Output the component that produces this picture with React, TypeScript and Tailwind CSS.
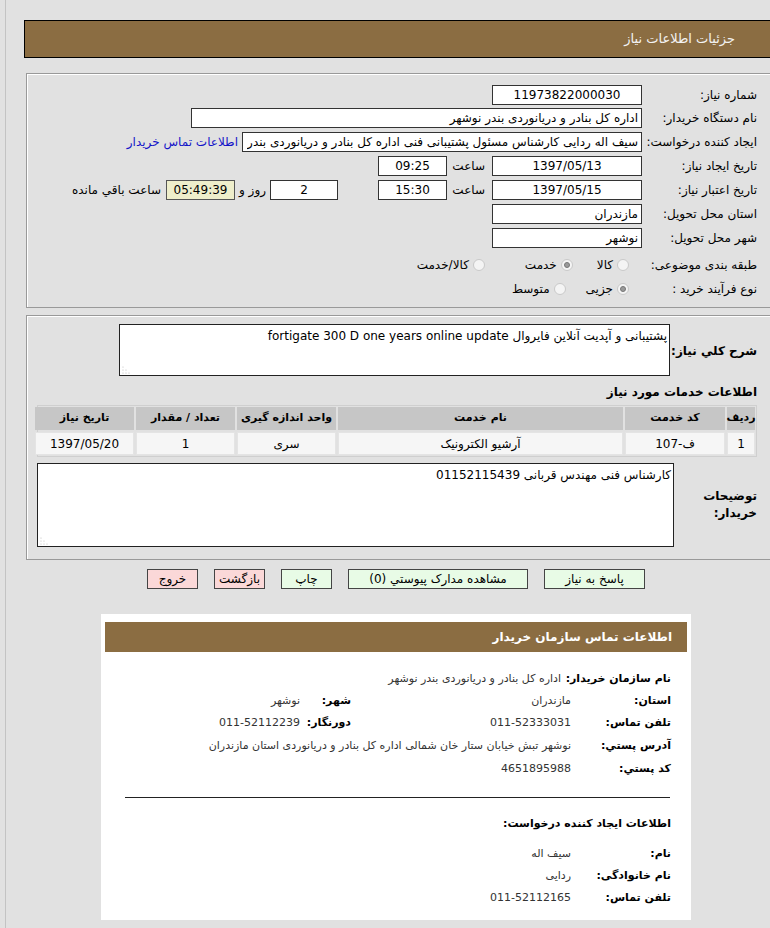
import React from "react";

const box = "h-[20px] border border-[#333] bg-white flex items-center overflow-hidden whitespace-nowrap";

function Field({ w, children, center = false }: { w: string; children: React.ReactNode; center?: boolean }) {
  return (
    <div className={`${box} ${w} shrink-0 px-[3px] ${center ? "justify-center" : "justify-start"}`}>
      {children}
    </div>
  );
}

function Radio({ checked = false }: { checked?: boolean }) {
  return (
    <span className="w-[12px] h-[12px] shrink-0 rounded-full border border-[#c9c9c9] bg-[#f4f4f4] flex items-center justify-center">
      {checked && <span className="w-[6px] h-[6px] rounded-full bg-[#9a9a9a] border border-[#777]" />}
    </span>
  );
}

function Grip() {
  return (
    <svg width="8" height="8" viewBox="0 0 8 8" className="shrink-0">
      <circle cx="1" cy="7" r="0.6" fill="#bbb" />
      <circle cx="4" cy="7" r="0.6" fill="#bbb" />
      <circle cx="1" cy="4" r="0.6" fill="#bbb" />
      <circle cx="7" cy="7" r="0.6" fill="#bbb" />
      <circle cx="4" cy="4" r="0.6" fill="#bbb" />
      <circle cx="1" cy="1" r="0.6" fill="#bbb" />
    </svg>
  );
}

const cols = [
  { title: "ردیف", w: "w-[28px]", value: "1" },
  { title: "کد خدمت", w: "w-[100px]", value: "ف-107" },
  { title: "نام خدمت", w: "w-[285px]", value: "آرشیو الکترونیک" },
  { title: "واحد اندازه گیری", w: "w-[99px]", value: "سری" },
  { title: "تعداد / مقدار", w: "w-[99px]", value: "1" },
  { title: "تاریخ نیاز", w: "w-[99px]", value: "1397/05/20" },
];

function InfoRow({ label, value, label2, value2, h = "h-[22px]", lw = "w-[100px]" }: {
  label: string; value: string; label2?: string; value2?: string; h?: string; lw?: string;
}) {
  return (
    <div className={`flex items-center ${h}`}>
      <div className={`${lw} shrink-0 font-bold text-[11px] whitespace-nowrap`}>{label}</div>
      <div className="w-[220px] shrink-0 text-[11px] text-[#333] whitespace-nowrap">{value}</div>
      {label2 && <div className="w-[51px] shrink-0 font-bold text-[11px] whitespace-nowrap">{label2}</div>}
      {value2 && <div className="text-[11px] text-[#333] whitespace-nowrap">{value2}</div>}
    </div>
  );
}

export default function App() {
  return (
    <div className="w-[770px] h-[928px] overflow-hidden bg-[#e1e1e1] text-[12px] text-black font-['DejaVu_Sans',sans-serif] flex">
      <div className="w-[5px] shrink-0" />
      <div className="w-[765px] shrink-0 border-l border-[#c3c3c3] pl-[18px]">
        <div dir="rtl" className="w-[751px]">
          {/* Header */}
          <div className="mt-[20px] h-[38px] border border-black bg-[#8b6d42] flex items-center pr-[39px] text-[13px] text-[#f3f3f3]">
            جزئیات اطلاعات نیاز
          </div>

          {/* Panel 1 */}
          <div className="mt-[15px] w-[749px] border border-[#999] shadow-[inset_1px_1px_0_#fff] pt-[9px] pb-[7px] pr-[17px]">
            <div className="flex items-center h-[23px]">
              <div className="w-[115px] shrink-0">شماره نیاز:</div>
              <Field w="w-[150px]" center>11973822000030</Field>
            </div>
            <div className="flex items-center h-[24px]">
              <div className="w-[115px] shrink-0">نام دستگاه خریدار:</div>
              <Field w="w-[451px]">اداره کل بنادر و دریانوردی بندر نوشهر</Field>
            </div>
            <div className="flex items-center h-[24px]">
              <div className="w-[115px] shrink-0 whitespace-nowrap">ایجاد کننده درخواست:</div>
              <Field w="w-[400px]">
                <span className="overflow-hidden">سیف اله ردایی کارشناس مسئول پشتیبانی فنی اداره کل بنادر و دریانوردی بندر</span>
              </Field>
              <span className="mr-[4px] text-[#1414c8] whitespace-nowrap">اطلاعات تماس خریدار</span>
            </div>
            <div className="flex items-center h-[24px]">
              <div className="w-[115px] shrink-0">تاریخ ایجاد نیاز:</div>
              <Field w="w-[150px]" center>1397/05/13</Field>
              <div className="w-[45px] shrink-0 pr-[7px]">ساعت</div>
              <Field w="w-[69px]" center>09:25</Field>
            </div>
            <div className="flex items-center h-[24px]">
              <div className="w-[115px] shrink-0">تاریخ اعتبار نیاز:</div>
              <Field w="w-[150px]" center>1397/05/15</Field>
              <div className="w-[45px] shrink-0 pr-[7px]">ساعت</div>
              <Field w="w-[69px]" center>15:30</Field>
              <div className="w-[40px] shrink-0" />
              <Field w="w-[68px]" center>2</Field>
              <span className="mr-[4px] ml-[4px] whitespace-nowrap">روز و</span>
              <div className="h-[20px] w-[69px] shrink-0 border border-[#555] bg-[#eeeecb] flex items-center justify-center">05:49:39</div>
              <span className="mr-[5px] whitespace-nowrap">ساعت باقي مانده</span>
            </div>
            <div className="flex items-center h-[24px]">
              <div className="w-[115px] shrink-0">استان محل تحویل:</div>
              <Field w="w-[150px]">مازندران</Field>
            </div>
            <div className="flex items-center h-[24px]">
              <div className="w-[115px] shrink-0">شهر محل تحویل:</div>
              <Field w="w-[150px]">نوشهر</Field>
            </div>
            <div className="flex items-center h-[24px] mt-[3px]">
              <div className="w-[115px] shrink-0">طبقه بندی موضوعی:</div>
              <span className="mr-[13px]"><Radio /></span>
              <span className="mr-[4px]">کالا</span>
              <span className="mr-[24px]"><Radio checked /></span>
              <span className="mr-[4px]">خدمت</span>
              <span className="mr-[40px]"><Radio /></span>
              <span className="mr-[4px]">کالا/خدمت</span>
            </div>
            <div className="flex items-center h-[23px]">
              <div className="w-[115px] shrink-0">نوع فرآیند خرید :</div>
              <span className="mr-[13px]"><Radio checked /></span>
              <span className="mr-[4px]">جزیی</span>
              <span className="mr-[20px]"><Radio /></span>
              <span className="mr-[4px]">متوسط</span>
            </div>
          </div>

          {/* Panel 2 */}
          <div className="mt-[7px] w-[749px] border border-[#999] shadow-[inset_1px_1px_0_#fff] pt-[8px] pb-[12px] pr-[17px]">
            <div className="flex items-center">
              <div className="w-[87px] shrink-0 font-bold text-[12px] whitespace-nowrap pt-[2px]">شرح کلي نیاز:</div>
              <div className="w-[551px] h-[52px] border border-[#222] bg-white flex flex-col justify-between px-[2px] pt-[2px] pb-[1px]">
                <div className="whitespace-nowrap">پشتیبانی و آپدیت آنلاین فایروال fortigate 300 D one years online update</div>
                <div className="flex justify-end"><Grip /></div>
              </div>
            </div>
            <div className="mt-[6px] h-[20px] flex items-center font-bold text-[12px]">اطلاعات خدمات مورد نیاز</div>
            <div className="mt-[3px] w-[720px] border border-[#cfcfcf] p-[1px] flex flex-col gap-[2px]">
              <div className="flex gap-[2px]">
                {cols.map((c) => (
                  <div key={c.title} className={`${c.w} shrink-0 h-[23px] bg-[#c6c6c6] flex items-center justify-center font-bold text-[11px] whitespace-nowrap`}>
                    {c.title}
                  </div>
                ))}
              </div>
              <div className="flex gap-[2px]">
                {cols.map((c) => (
                  <div key={c.title} className={`${c.w} shrink-0 h-[23px] bg-[#f6f6f6] border border-[#e4e4e4] flex items-center justify-center`}>
                    {c.value}
                  </div>
                ))}
              </div>
            </div>
            <div className="mt-[6px] flex items-center">
              <div className="w-[83px] shrink-0 font-bold text-[12px] leading-[17px]">
                توضیحات
                <br />
                خریدار:
              </div>
              <div className="w-[637px] h-[84px] border border-[#222] bg-white flex flex-col justify-between px-[2px] pt-[2px] pb-[1px]">
                <div className="whitespace-nowrap">کارشناس فنی مهندس قربانی 01152115439</div>
                <div className="flex justify-end"><Grip /></div>
              </div>
            </div>
          </div>

          {/* Buttons */}
          <div className="mt-[9px] flex pr-[130px] gap-[16px]">
            <div className="w-[101px] h-[20px] border border-[#444] bg-[#e8fbe6] flex items-center justify-center">پاسخ به نیاز</div>
            <div className="w-[180px] h-[20px] border border-[#444] bg-[#e8fbe6] flex items-center justify-center">مشاهده مدارک پیوستي (0)</div>
            <div className="w-[51px] h-[20px] border border-[#444] bg-[#e8fbe6] flex items-center justify-center">چاپ</div>
            <div className="w-[51px] h-[20px] border border-[#444] bg-[#fbd8d8] flex items-center justify-center whitespace-nowrap">بازگشت</div>
            <div className="w-[51px] h-[20px] border border-[#444] bg-[#fbd8d8] flex items-center justify-center">خروج</div>
          </div>

          {/* Contact card */}
          <div className="mt-[25px] mr-[84px] w-[590px] bg-white pt-[8px] px-[4px] pb-[11px]">
            <div className="h-[30px] bg-[#8b6d42] flex items-center pr-[15px] font-bold text-[12px] text-white">
              اطلاعات تماس سازمان خریدار
            </div>
            <div className="pr-[16px] mt-[16px]">
              <InfoRow label="نام سازمان خریدار:" value="اداره کل بنادر و دریانوردی بندر نوشهر" lw="w-[110px]" />
              <InfoRow label="استان:" value="مازندران" label2="شهر:" value2="نوشهر" />
              <InfoRow label="تلفن تماس:" value="011-52333031" label2="دورنگار:" value2="011-52112239" />
              <InfoRow label="آدرس پستي:" value="نوشهر تبش خیابان ستار خان شمالی اداره کل بنادر و دریانوردی استان مازندران" h="h-[24px]" />
              <InfoRow label="کد پستي:" value="4651895988" />
            </div>
            <div className="mt-[17px] mr-[17px] w-[545px] h-px bg-[#222]" />
            <div className="pr-[16px] mt-[18px]">
              <div className="h-[16px] flex items-center font-bold text-[11px]">اطلاعات ایجاد کننده درخواست:</div>
              <div className="mt-[11px]">
                <InfoRow label="نام:" value="سیف اله" />
                <InfoRow label="نام خانوادگی:" value="ردایی" />
                <InfoRow label="تلفن تماس:" value="011-52112165" />
              </div>
            </div>
          </div>
        </div>
      </div>
    </div>
  );
}
